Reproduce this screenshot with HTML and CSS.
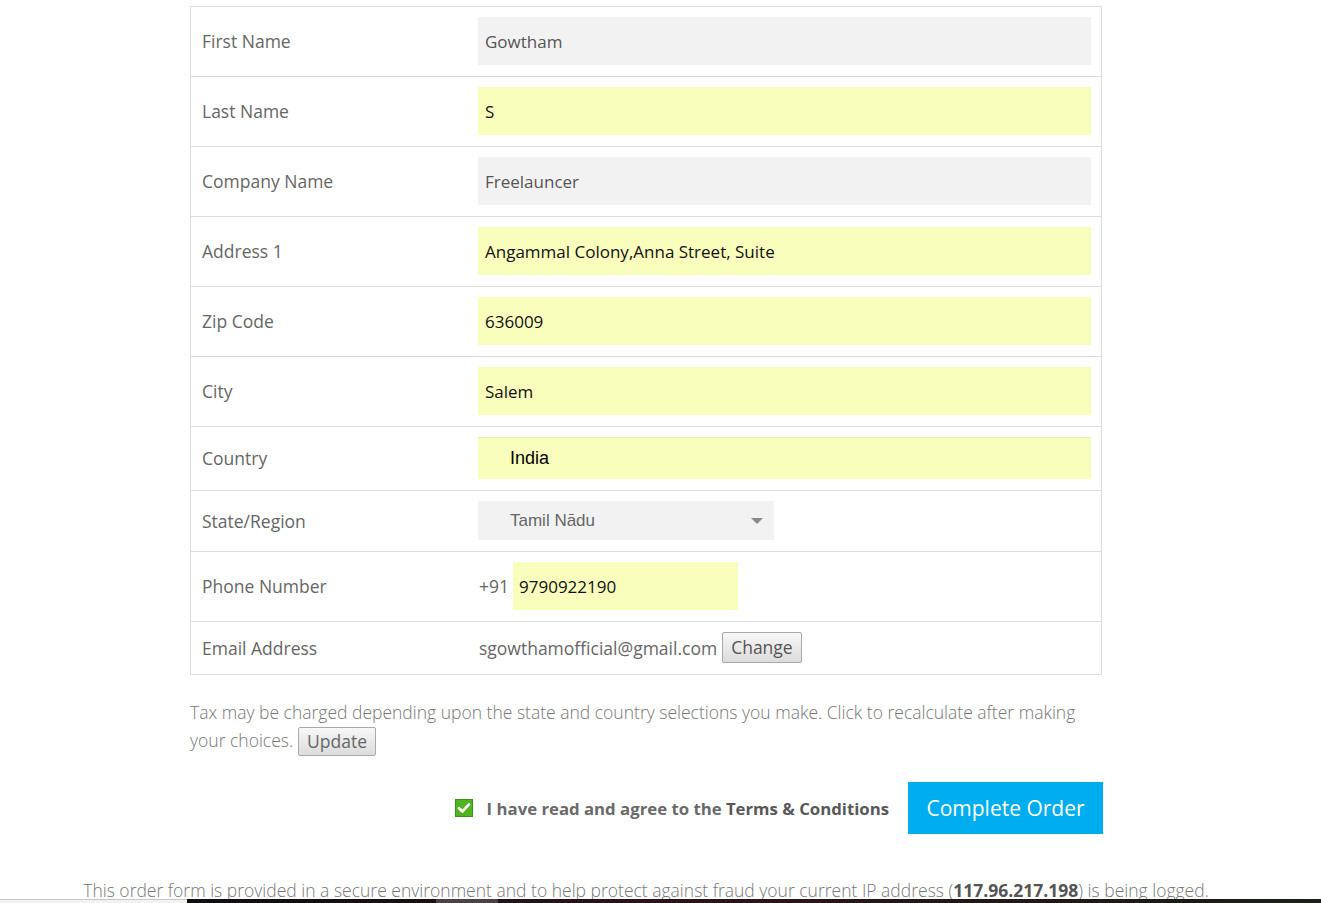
FILE: index.html
```html
<!DOCTYPE html>
<html lang="en">
<head>
<meta charset="utf-8">
<title>Checkout</title>
<link rel="stylesheet" href="styles.css">
</head>
<body>
<div class="page">
  <div class="form">
    <div class="row">
      <div class="label">First Name</div>
      <div class="value"><div class="field gray">Gowtham</div></div>
    </div>
    <div class="row">
      <div class="label">Last Name</div>
      <div class="value"><div class="field auto">S</div></div>
    </div>
    <div class="row">
      <div class="label">Company Name</div>
      <div class="value"><div class="field gray">Freelauncer</div></div>
    </div>
    <div class="row">
      <div class="label">Address 1</div>
      <div class="value"><div class="field auto">Angammal Colony,Anna Street, Suite</div></div>
    </div>
    <div class="row">
      <div class="label">Zip Code</div>
      <div class="value"><div class="field auto">636009</div></div>
    </div>
    <div class="row">
      <div class="label">City</div>
      <div class="value"><div class="field auto">Salem</div></div>
    </div>
    <div class="row">
      <div class="label">Country</div>
      <div class="value"><div class="field auto country">India</div></div>
    </div>
    <div class="row">
      <div class="label">State/Region</div>
      <div class="value"><div class="select">Tamil Nādu<span class="caret"></span></div></div>
    </div>
    <div class="row">
      <div class="label">Phone Number</div>
      <div class="value phone"><span class="prefix">+91</span><div class="field auto phone-field">9790922190</div></div>
    </div>
    <div class="row email-row">
      <div class="label">Email Address</div>
      <div class="value email"><span>sgowthamofficial@gmail.com</span><button class="btn">Change</button></div>
    </div>
  </div>

  <div class="tax">
    <div class="tax-line">Tax may be charged depending upon the state and country selections you make. Click to recalculate after making</div>
    <div class="tax-line2"><span>your choices.</span><button class="btn">Update</button></div>
  </div>

  <div class="submit">
    <label class="agree">
      <span class="check"><svg viewBox="0 0 18 18" width="18" height="18"><rect x="0.5" y="0.5" width="17" height="17" fill="#4fb51f" stroke="#3f8f1a"/><path d="M4 9.2 L7.4 12.4 L14 5.4" fill="none" stroke="#fff" stroke-width="2.8" stroke-linecap="round" stroke-linejoin="round"/></svg></span>
      <span class="agree-text">I have read and agree to the <span class="terms">Terms &amp; Conditions</span></span>
    </label>
    <button class="complete">Complete Order</button>
  </div>

  <p class="secure"><span>This order form is provided in a secure environment and to help protect against fraud your current IP address (<strong>117.96.217.198</strong>) is being logged.</span></p>
</div>
<div class="taskbar"><span class="tb-left"></span><span class="tb-right"></span></div>
</body>
</html>
```

FILE: styles.css
```css
html, body {
  margin: 0;
  padding: 0;
  background: #fff;
}
body {
  font-family: "Open Sans", "Liberation Sans", sans-serif;
  color: #666;
  overflow: hidden;
}
.page {
  width: 912px;
  margin-left: 190px;
  padding-top: 6px;
}
.form {
  border: 1px solid #ddd;
}
.row {
  display: grid;
  grid-template-columns: 277px 1fr;
  border-top: 1px solid #ddd;
}
.row:first-child {
  border-top: none;
}
.label {
  padding-left: 11px;
  padding-bottom: 1px;
  font-size: 17.5px;
  color: #666;
  display: flex;
  align-items: center;
}
.value {
  padding: 10px 10px 11px 10px;
  display: flex;
  align-items: center;
}
.field {
  height: 48px;
  flex: 1;
  display: flex;
  align-items: center;
  padding-left: 7px;
  font-size: 17px;
  box-sizing: border-box;
}
.gray {
  background: #f2f2f2;
  color: #555;
}
.auto {
  background: #fafebd;
  color: #111;
}
.country {
  height: 42px;
  padding-left: 32px;
  font-family: "Liberation Sans", Arial, sans-serif;
  font-size: 18px;
  color: #000;
  border-top: 1px solid #eef0b0;
}
.select {
  width: 296px;
  height: 39px;
  box-sizing: border-box;
  background: #f2f2f2;
  display: flex;
  align-items: center;
  padding-left: 32px;
  font-family: "Liberation Sans", Arial, sans-serif;
  font-size: 17px;
  color: #666;
  position: relative;
}
.caret {
  position: absolute;
  right: 11px;
  top: 17px;
  width: 0;
  height: 0;
  border-left: 6px solid transparent;
  border-right: 6px solid transparent;
  border-top: 6px solid #8a8a8a;
}
.phone .prefix {
  font-size: 17.5px;
  color: #666;
  padding-left: 1px;
  width: 34px;
}
.phone-field {
  flex: none;
  width: 225px;
  padding-left: 6px;
}
.email {
  font-size: 17.5px;
  color: #666;
}
.email span {
  padding-left: 1px;
}
.btn {
  font-family: "Open Sans", "Liberation Sans", sans-serif;
  font-size: 17.5px;
  color: #555;
  background: linear-gradient(#f7f7f7, #dcdcdc);
  border: 1px solid #a9a9a9;
  border-radius: 2px;
  height: 31px;
  padding: 0 8px;
  margin-left: 5px;
  line-height: 27px;
  cursor: pointer;
}
.tax {
  margin: 23px 0 0 0;
  font-size: 17.5px;
  font-weight: 300;
  line-height: 28px;
  color: #777;
}
.tax-line2 {
  display: flex;
  align-items: center;
  height: 28px;
}
.tax .btn {
  margin-left: 5px;
  margin-top: 2px;
  height: 29px;
  line-height: 25px;
  font-weight: 400;
  color: #666;
}
.submit {
  display: flex;
  justify-content: flex-end;
  align-items: center;
  margin-top: 28px;
  margin-right: -1px;
}
.agree {
  display: flex;
  align-items: center;
  font-size: 16.75px;
  font-weight: 700;
  color: #6a6a6a;
}
.agree-text {
  white-space: nowrap;
}
.check {
  display: inline-flex;
  margin-right: 14px;
}
.terms {
  color: #585858;
}
.complete {
  margin-left: 19px;
  width: 195px;
  height: 52px;
  background: #00aeef;
  border: none;
  color: #fff;
  font-family: "Open Sans", "Liberation Sans", sans-serif;
  font-size: 21px;
  font-weight: 400;
  cursor: pointer;
}
.secure {
  margin: 44px 0 0 0;
  display: flex;
  justify-content: center;
  white-space: nowrap;
  font-size: 17.5px;
  font-weight: 300;
  line-height: 24px;
  color: #777;
}
.secure strong {
  font-weight: 700;
  color: #555;
}
.taskbar {
  position: fixed;
  left: 0;
  right: 0;
  bottom: 0;
  height: 4px;
  display: flex;
}
.tb-left {
  width: 187px;
  border-top: 1px solid #c8c8c8;
  background: #f2f2f2;
}
.tb-right {
  flex: 1;
  background: linear-gradient(90deg, #0e0e10 0, #1a1012 249px, #4a4245 249px, #4a4245 311px, #24121a 311px, #2a1418 600px, #1c1a14 1000px, #1a2218 100%);
}
```
